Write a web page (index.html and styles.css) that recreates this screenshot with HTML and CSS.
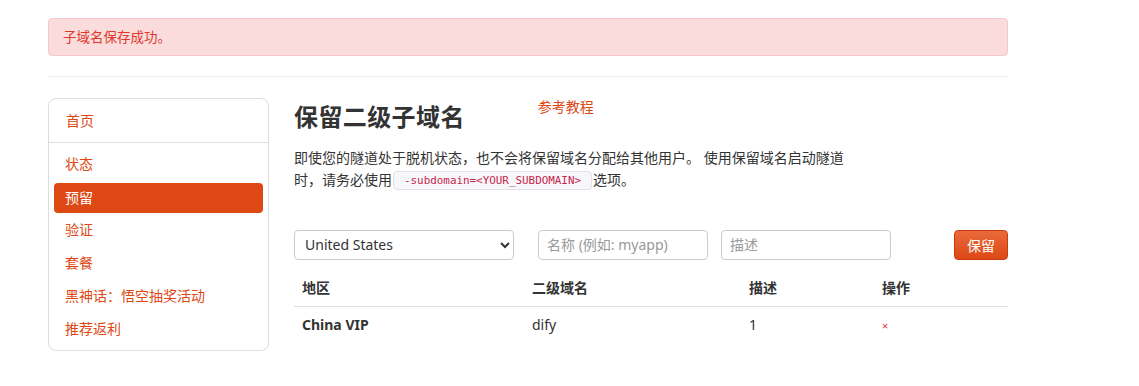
FILE: index.html
```html
<!DOCTYPE html>
<html lang="zh-CN">
<head>
  <meta charset="UTF-8">
  <meta name="viewport" content="width=device-width, initial-scale=1.0">
  <title>保留二级子域名</title>
  <link rel="stylesheet" href="styles.css">
</head>
<body>

  <div class="container">
    <div class="alert">子域名保存成功。</div>
    <hr class="divider">

    <div class="layout">
      <div class="side-nav">
        <a href="#" class="nav-home">首页</a>
        <div class="nav-list">
          <a href="#">状态</a>
          <a href="#" class="active">预留</a>
          <a href="#">验证</a>
          <a href="#">套餐</a>
          <a href="#">黑神话：悟空抽奖活动</a>
          <a href="#">推荐返利</a>
        </div>
      </div>

      <div class="main">
        <div class="title-row">
          <h2>保留二级子域名</h2>
          <a href="#" class="guide-link">参考教程</a>
        </div>
        <p class="intro">
          即使您的隧道处于脱机状态，也不会将保留域名分配给其他用户。 使用保留域名启动隧道时，请务必使用<code>-subdomain=&lt;YOUR_SUBDOMAIN&gt;</code>选项。
        </p>

        <form class="reserve-form">
          <select class="region-select">
            <option>United States</option>
            <option>China VIP</option>
          </select>
          <input type="text" class="name-input" placeholder="名称 (例如: myapp)">
          <input type="text" class="desc-input" placeholder="描述">
          <button type="button" class="reserve-button">保留</button>
        </form>

        <table class="domain-table">
          <thead>
            <tr>
              <th class="col-region">地区</th>
              <th class="col-domain">二级域名</th>
              <th class="col-desc">描述</th>
              <th>操作</th>
            </tr>
          </thead>
          <tbody>
            <tr>
              <td class="region-name">China VIP</td>
              <td>dify</td>
              <td>1</td>
              <td><a href="#" class="remove">×</a></td>
            </tr>
          </tbody>
        </table>
      </div>
    </div>
  </div>

</body>
</html>
```

FILE: styles.css
```css
* {
  margin: 0;
  padding: 0;
  box-sizing: border-box;
}

body {
  font-family: "Noto Sans", "Noto Sans CJK SC", sans-serif;
  font-size: 14px;
  line-height: 1.5;
  color: #333;
  background: #fff;
}

a {
  color: #dd4814;
  text-decoration: none;
}

.container {
  width: 960px;
  margin-left: 48px;
  padding-top: 18px;
}

.alert {
  background: #fadcdc;
  border: 1px solid #f6c7c9;
  border-radius: 4px;
  color: #df382c;
  font-size: 13.5px;
  padding: 8px 14px;
  height: 38px;
}

.divider {
  border: none;
  border-top: 1px solid #eee;
  margin: 20px 0 21px;
}

.layout {
  display: flex;
  align-items: flex-start;
}

/* sidebar */
.side-nav {
  width: 221px;
  border: 1px solid #ddd;
  border-radius: 8px;
  padding-bottom: 5px;
  margin-right: 25px;
}

.side-nav a {
  display: block;
  padding: 6px 11px;
  line-height: 21px;
}

.nav-home {
  padding: 11px 17px !important;
  border-bottom: 1px solid #ddd;
}

.nav-list {
  padding: 4px 5px 0;
}

.nav-list a {
  border-radius: 4px;
}

.nav-list a.active {
  background: #dd4814;
  color: #fff;
  padding: 4px 11px;
  margin-top: 3px;
  height: 30px;
  line-height: 22px;
}

/* main column */
.main {
  flex: 1;
}

.title-row {
  display: flex;
  align-items: flex-start;
}

.title-row h2 {
  font-size: 24px;
  font-weight: 700;
  line-height: 1.2;
  margin-top: 5px;
  color: #333;
  letter-spacing: 0.4px;
}

.guide-link {
  margin-left: 73px;
  margin-top: -2px;
}

.intro {
  width: 556px;
  margin-top: 15px;
  line-height: 22px;
}

.intro code {
  display: inline-block;
  font-family: "DejaVu Sans Mono", monospace;
  font-size: 10.9px;
  line-height: 17px;
  color: #c7254e;
  background: #f7f7f9;
  border: 1px solid #e1e1e8;
  border-radius: 4px;
  padding: 0 10px;
  margin: 0 1px;
  vertical-align: 1px;
}

.reserve-form {
  display: flex;
  align-items: center;
  margin-top: 39px;
  height: 30px;
}

.reserve-form select,
.reserve-form input {
  height: 30px;
  border: 1px solid #ccc;
  border-radius: 4px;
  font-family: inherit;
  font-size: 14px;
  color: #333;
  background: #fff;
  padding: 0 8px;
}

.reserve-form select {
  padding: 0 6px;
}

.reserve-form input::placeholder {
  color: #999;
}

.region-select {
  width: 220px;
}

.name-input {
  width: 170px;
  margin-left: 24px;
}

.desc-input {
  width: 170px;
  margin-left: 13px;
}

.reserve-button {
  margin-left: auto;
  width: 54px;
  height: 30px;
  border: 1px solid #c63e10;
  border-radius: 4px;
  background: linear-gradient(#ea6a3a, #dd4814);
  color: #fff;
  font-family: inherit;
  font-size: 14px;
  cursor: pointer;
}

/* table */
.domain-table {
  width: 100%;
  margin-top: 10px;
  border-collapse: collapse;
}

.domain-table th {
  text-align: left;
  font-weight: 700;
  padding: 8px;
  line-height: 20px;
  border-bottom: 1px solid #ddd;
}

.domain-table td {
  padding: 8px;
  line-height: 20px;
}

.col-region {
  width: 230px;
}

.col-domain {
  width: 217px;
}

.col-desc {
  width: 133px;
}

.region-name {
  font-weight: 700;
}

.remove {
  color: #df382c;
  font-size: 11px;
}
```
